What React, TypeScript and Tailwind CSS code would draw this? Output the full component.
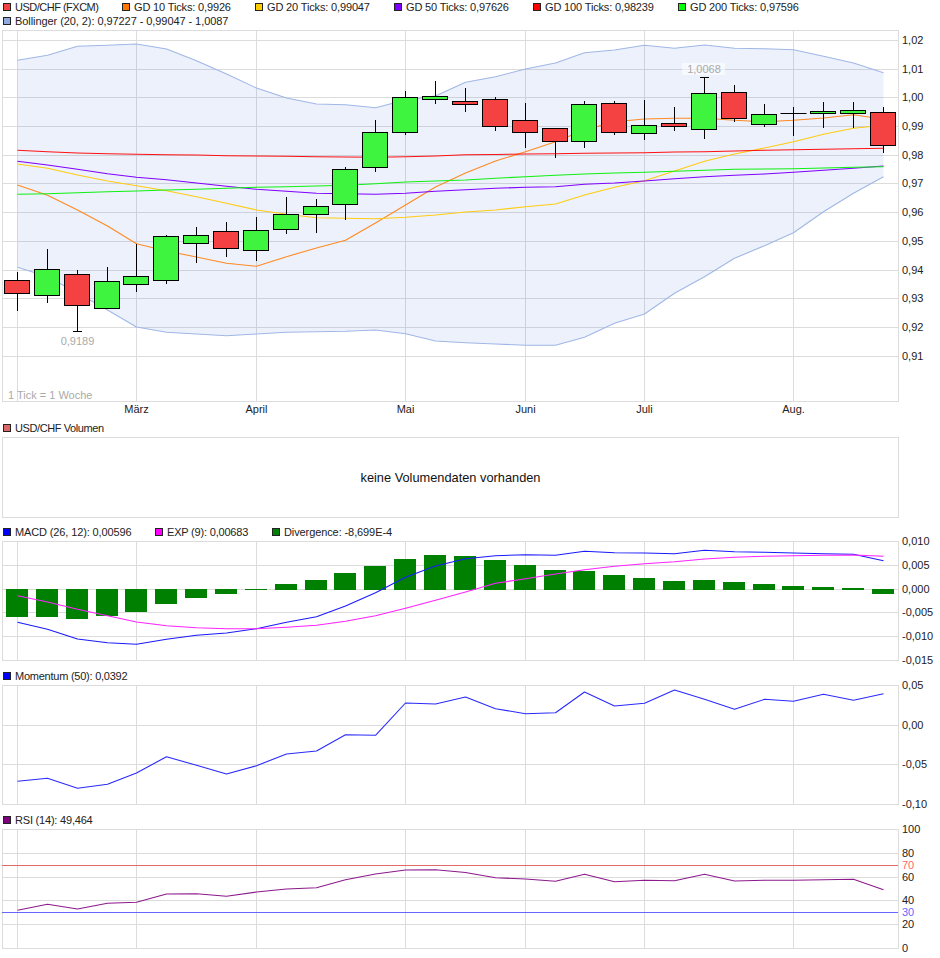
const xs = [
  17, 47, 77, 107, 136, 166, 196, 226, 256, 286, 316, 345, 375, 405, 435, 465, 495, 525, 555, 584,
  614, 644, 674, 704, 734, 764, 793, 823, 853, 883,
];
const gridX = [17.5, 136.5, 256.5, 405.5, 525.5, 644.5, 793.5];

// body top, body bottom, high, low, colour
const candles: [number, number, number, number, "g" | "r"][] = [
  [280, 293, 272, 310, "r"],
  [269, 295, 249, 302, "g"],
  [274, 305, 270, 331, "r"],
  [281, 308, 267, 308, "g"],
  [276, 284, 244, 291, "g"],
  [236, 280, 235, 283, "g"],
  [235, 243, 227, 262, "g"],
  [231, 248, 222, 256, "r"],
  [230, 250, 217, 260, "g"],
  [214, 229, 197, 233, "g"],
  [206, 214, 199, 232, "g"],
  [169, 204, 167, 219, "g"],
  [132, 167, 120, 171, "g"],
  [97, 132, 91, 134, "g"],
  [96, 99, 81, 103, "g"],
  [101, 104, 88, 111, "r"],
  [99, 126, 97, 130, "r"],
  [120, 132, 103, 147, "r"],
  [128, 141, 128, 157, "r"],
  [104, 141, 101, 147, "g"],
  [103, 132, 101, 134, "r"],
  [125, 133, 100, 139, "g"],
  [123, 126, 107, 130, "r"],
  [93, 129, 77, 138, "g"],
  [92, 118, 85, 121, "r"],
  [114, 124, 104, 126, "g"],
  [113, 113, 107, 135, "g"],
  [111, 113, 102, 127, "g"],
  [110, 113, 102, 127, "g"],
  [112, 145, 107, 152, "r"],
];

const bollUp = [60.3, 55.3, 46.3, 45.3, 44, 49, 60.7, 74, 88, 98, 104, 104.7, 107.7, 100, 96, 82.3, 76.7, 69, 63, 52.7, 50, 45.3, 48.3, 45, 48.3, 48.7, 49.7, 56.3, 63, 72.7];
const bollLow = [267.3, 276.7, 293, 310, 327, 332.3, 334, 335.7, 334, 332.3, 331.7, 331.3, 330, 333.7, 341, 342.7, 344, 345.3, 345.3, 337.3, 323.3, 314, 293.3, 276.7, 258.3, 245.7, 232.7, 211.7, 193.3, 176.7];
const gd10 = [185, 195.3, 210, 226, 243.7, 251, 257, 263.3, 266.3, 256.7, 248, 240.3, 223, 205, 187, 173, 161, 151.7, 141.7, 130, 121.7, 119, 118.3, 118.3, 120.3, 121.7, 120.3, 118, 114.7, 119.3];
const gd20 = [164, 168.3, 175, 181, 185.7, 190.7, 196.7, 203.3, 210, 214.3, 217.7, 218.3, 218.7, 217.3, 215, 212, 210, 206.7, 204, 195, 187.3, 180.7, 171, 161.3, 154, 148, 141.7, 134.3, 128.3, 125.3];
const gd50 = [161.3, 165, 169.3, 173.7, 177.3, 179.7, 183, 186.3, 189.3, 191.3, 193.3, 193.7, 194.3, 193.3, 191.3, 189.7, 188.3, 187.3, 186.7, 184.3, 183, 181, 178.7, 176.7, 175.3, 174, 172.3, 170.3, 168.3, 166];
const gd100 = [150.3, 151.7, 153, 153.7, 154.3, 154.7, 155, 155.7, 156, 156.3, 156.7, 157, 157.3, 156.7, 156, 154.7, 154.5, 154, 153.7, 153.3, 153, 152.7, 152, 151.7, 151, 150.3, 149.7, 149.3, 148.7, 148.3];
const gd200 = [194.3, 193.7, 192.7, 191.7, 191, 190, 189.3, 188.3, 187.3, 186.7, 186, 185.3, 183.7, 182, 181, 180, 178.3, 176.7, 175.3, 174, 173, 172.3, 171.3, 170.3, 169.3, 169, 168.7, 168, 167.3, 166.7];

const macd = [622.3, 629.3, 639, 642.7, 644.3, 639.3, 635.3, 633, 628.7, 622.3, 616.7, 606, 592.7, 577.3, 566, 558.7, 555.7, 554.7, 555.3, 551.3, 552.7, 553, 553.7, 550.3, 551.7, 552.3, 553, 553.7, 554.3, 560.7];
const exp = [595.7, 602, 609.3, 615.7, 622, 625.7, 627.7, 628.7, 628.7, 627.3, 625.3, 621.3, 615.7, 608.3, 600.3, 592, 583.3, 578.7, 574, 569.7, 566.3, 563.7, 561.7, 559, 557.3, 556.3, 555.7, 555.3, 555, 556.3];
// end of each divergence bar, the other end sits on the zero line
const divergence = [617, 617, 619, 616, 612, 604, 598, 594, 590, 584, 580, 573, 566, 559, 555, 556, 560, 565, 570, 571, 575, 578, 581, 580, 582, 584, 586, 587, 588, 594];

const momentum = [781.3, 778.3, 788.3, 784.3, 773, 756.7, 765.3, 774, 765.7, 754, 751, 734.7, 735.3, 703, 704, 697, 708.7, 713.7, 712.7, 692, 706, 703.3, 690, 699.3, 709.3, 699.3, 701.3, 694.3, 700.3, 693.7];
const rsi = [910.3, 904.3, 909, 903.3, 902.3, 894, 893.7, 896.3, 892, 889, 887.7, 879.7, 874, 870, 869.7, 872.5, 877.7, 879, 881.3, 874.3, 881.7, 880.3, 880.7, 874.3, 881, 880.3, 880.3, 879.7, 879.3, 889.7];

const points = (ys: number[]) => ys.map((y, i) => `${xs[i] + 0.5},${y}`).join(" ");

function Legend({ items }: { items: { label: string; color: string; width: string }[] }) {
  return (
    <div className="flex h-[14px] items-center pl-[3px]">
      {items.map((item) => (
        <div key={item.label} className={`flex items-center gap-[4px] ${item.width}`}>
          <span className="h-[8px] w-[8px] border border-[#222]" style={{ backgroundColor: item.color }} />
          <span className="whitespace-nowrap">{item.label}</span>
        </div>
      ))}
    </div>
  );
}

function Grid({ top, bottom, rows }: { top: number; bottom: number; rows: number[] }) {
  return (
    <g stroke="#dcdcdc" strokeWidth="1" fill="none">
      {rows.map((y) => (
        <line key={y} x1="2" x2="898" y1={y} y2={y} />
      ))}
      {gridX.map((x) => (
        <line key={x} x1={x} x2={x} y1={top} y2={bottom} />
      ))}
      <rect x="2.5" y={top} width="896" height={bottom - top} />
    </g>
  );
}

function AxisLabels({ labels }: { labels: [string, number][] }) {
  return (
    <g fill="#222">
      {labels.map(([text, y]) => (
        <text key={text} x="902" y={y + 3.5}>
          {text}
        </text>
      ))}
    </g>
  );
}

function Line({ ys, color, width = 1.1 }: { ys: number[]; color: string; width?: number }) {
  return <polyline points={points(ys)} fill="none" stroke={color} strokeWidth={width} strokeLinejoin="round" />;
}

function MainChart() {
  const area = `${points(bollUp)} ${[...bollLow]
    .map((y, i) => `${xs[i] + 0.5},${y}`)
    .reverse()
    .join(" ")}`;

  return (
    <svg width="940" height="393" viewBox="0 28 940 393" className="block overflow-visible">
      <Grid
        top={30.5}
        bottom={401.5}
        rows={[40.5, 69.5, 97.5, 126.5, 155.5, 183.5, 212.5, 241.5, 270.5, 298.5, 327.5, 356.5]}
      />
      <polygon points={area} fill="#2962e0" fillOpacity="0.09" />
      <Line ys={bollUp} color="#a0b7e6" />
      <Line ys={bollLow} color="#a0b7e6" />
      <Line ys={gd10} color="#ff8a22" />
      <Line ys={gd20} color="#ffcc11" />
      <Line ys={gd50} color="#8000ff" />
      <Line ys={gd100} color="#ff1111" />
      <Line ys={gd200} color="#11f011" />

      {candles.map(([top, bottom, high, low, kind], i) => {
        const x = xs[i] + 0.5;
        return (
          <g key={x} stroke="#000" strokeWidth="1">
            <line x1={x} x2={x} y1={high} y2={low + 1} />
            {top === bottom ? (
              <line x1={x - 13} x2={x + 13} y1={top + 0.5} y2={top + 0.5} />
            ) : (
              <rect
                x={x - 13}
                y={top + 0.5}
                width="25"
                height={bottom - top}
                fill={kind === "g" ? "#3ef43e" : "#f44242"}
              />
            )}
          </g>
        );
      })}
      <line x1="73" x2="82" y1="331.5" y2="331.5" stroke="#000" />
      <line x1="700" x2="709" y1="77.5" y2="77.5" stroke="#000" />

      <rect x="682" y="63" width="43" height="12" fill="#fff" fillOpacity="0.55" />
      <text x="704" y="73" textAnchor="middle" fill="#aaa">
        1,0068
      </text>
      <text x="77.5" y="345" textAnchor="middle" fill="#aaa">
        0,9189
      </text>
      <text x="8" y="399" fill="#aaa">
        1 Tick = 1 Woche
      </text>

      <g fill="#222" textAnchor="middle">
        <text x="136.5" y="413">März</text>
        <text x="256.5" y="413">April</text>
        <text x="405.5" y="413">Mai</text>
        <text x="525.5" y="413">Juni</text>
        <text x="644.5" y="413">Juli</text>
        <text x="793.5" y="413">Aug.</text>
      </g>

      <AxisLabels
        labels={[
          ["1,02", 40.5],
          ["1,01", 69.5],
          ["1,00", 97.5],
          ["0,99", 126.5],
          ["0,98", 155.5],
          ["0,97", 183.5],
          ["0,96", 212.5],
          ["0,95", 241.5],
          ["0,94", 270.5],
          ["0,93", 298.5],
          ["0,92", 327.5],
          ["0,91", 356.5],
        ]}
      />
    </svg>
  );
}

function MacdChart() {
  return (
    <svg width="940" height="127" viewBox="0 539 940 127" className="block overflow-visible">
      <Grid top={541.5} bottom={660.5} rows={[565.5, 589.5, 612.5, 636.5]} />
      {divergence.map((end, i) => {
        const y1 = Math.min(end, 589);
        const y2 = Math.max(end, 590);
        return <rect key={xs[i]} x={xs[i] - 11} y={y1} width="22" height={y2 - y1} fill="#008000" />;
      })}
      <Line ys={macd} color="#1a1aff" />
      <Line ys={exp} color="#ff22ff" />
      <AxisLabels
        labels={[
          ["0,010", 541.5],
          ["0,005", 565.5],
          ["0,000", 589.5],
          ["-0,005", 612.5],
          ["-0,010", 636.5],
          ["-0,015", 660.5],
        ]}
      />
    </svg>
  );
}

function MomentumChart() {
  return (
    <svg width="940" height="127" viewBox="0 683 940 127" className="block overflow-visible">
      <Grid top={685.5} bottom={804.5} rows={[725.5, 764.5]} />
      <Line ys={momentum} color="#2a2aff" />
      <AxisLabels
        labels={[
          ["0,05", 685.5],
          ["0,00", 725.5],
          ["-0,05", 764.5],
          ["-0,10", 804.5],
        ]}
      />
    </svg>
  );
}

function RsiChart() {
  return (
    <svg width="940" height="131" viewBox="0 827 940 131" className="block overflow-visible">
      <Grid top={829.5} bottom={948.5} rows={[853.5, 877.5, 900.5, 924.5]} />
      <line x1="2" x2="898" y1="865.5" y2="865.5" stroke="#e46a6a" />
      <line x1="2" x2="898" y1="912.5" y2="912.5" stroke="#6666ff" />
      <Line ys={rsi} color="#8c1a8c" />
      <AxisLabels
        labels={[
          ["100", 829.5],
          ["80", 853.5],
          ["60", 877.5],
          ["40", 900.5],
          ["20", 924.5],
          ["0", 948.5],
        ]}
      />
      <text x="902" y="869" fill="#ff6666">70</text>
      <text x="902" y="916" fill="#6666ff">30</text>
    </svg>
  );
}

export default function App() {
  return (
    <div className="h-[958px] w-[940px] overflow-hidden bg-white font-['Liberation_Sans',sans-serif] text-[11px] text-[#222]">
      <Legend
        items={[
          { label: "USD/CHF (FXCM)", color: "#f44242", width: "w-[119px] tracking-[-0.5px]" },
          { label: "GD 10 Ticks: 0,9926", color: "#ff7700", width: "w-[133px] tracking-[-0.15px]" },
          { label: "GD 20 Ticks: 0,99047", color: "#ffcc00", width: "w-[139px] tracking-[-0.15px]" },
          { label: "GD 50 Ticks: 0,97626", color: "#7f00ff", width: "w-[139px] tracking-[-0.15px]" },
          { label: "GD 100 Ticks: 0,98239", color: "#ff0000", width: "w-[145px] tracking-[-0.15px]" },
          { label: "GD 200 Ticks: 0,97596", color: "#00ff00", width: "w-[200px] tracking-[-0.15px]" },
        ]}
      />
      <Legend
        items={[
          {
            label: "Bollinger (20, 2): 0,97227 - 0,99047 - 1,0087",
            color: "#8fa9dd",
            width: "w-[400px] tracking-[-0.07px]",
          },
        ]}
      />
      <MainChart />

      <Legend items={[{ label: "USD/CHF Volumen", color: "#dd6666", width: "w-[400px] tracking-[-0.4px]" }]} />
      <div className="ml-[2px] mt-[2px] flex h-[81px] w-[897px] items-center justify-center border border-[#dcdcdc] text-[12.8px] text-[#111]">
        keine Volumendaten vorhanden
      </div>

      <div className="mt-[7px]">
        <Legend
          items={[
            { label: "MACD (26, 12): 0,00596", color: "#0000ff", width: "w-[152px] tracking-[-0.13px]" },
            { label: "EXP (9): 0,00683", color: "#ff00ff", width: "w-[117px] tracking-[-0.19px]" },
            { label: "Divergence: -8,699E-4", color: "#008000", width: "w-[200px] tracking-[-0.1px]" },
          ]}
        />
      </div>
      <MacdChart />

      <div className="mt-[3px]">
        <Legend items={[{ label: "Momentum (50): 0,0392", color: "#0000ff", width: "w-[300px] tracking-[-0.24px]" }]} />
      </div>
      <MomentumChart />

      <div className="mt-[3px]">
        <Legend items={[{ label: "RSI (14): 49,464", color: "#800080", width: "w-[300px] tracking-[-0.2px]" }]} />
      </div>
      <RsiChart />
    </div>
  );
}
